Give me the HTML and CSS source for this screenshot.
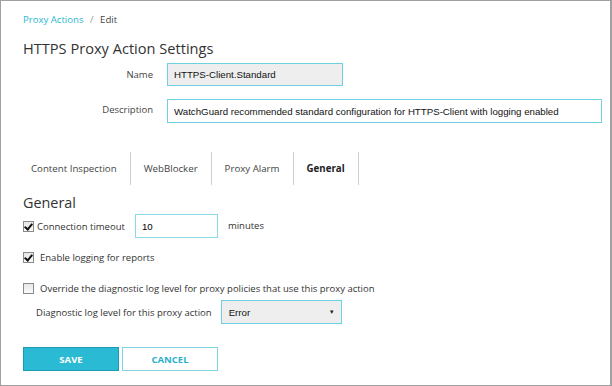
FILE: index.html
```html
<!DOCTYPE html>
<html lang="en">
<head>
    <meta charset="UTF-8">
    <title>HTTPS Proxy Action Settings</title>
    <link rel="stylesheet" href="styles.css">
</head>
<body>
    <div class="frame">
        <div class="breadcrumb">
            <a href="#">Proxy Actions</a>
            <span class="sep">/</span>
            <span>Edit</span>
        </div>
        <h1>HTTPS Proxy Action Settings</h1>

        <div class="form-grid">
            <label class="form-label">Name</label>
            <input class="text-input name-input" type="text" value="HTTPS-Client.Standard">
            <label class="form-label desc-label">Description</label>
            <input class="text-input desc-input" type="text" value="WatchGuard recommended standard configuration for HTTPS-Client with logging enabled">
        </div>

        <div class="tabs">
            <div class="tab first">Content Inspection</div>
            <div class="tab">WebBlocker</div>
            <div class="tab">Proxy Alarm</div>
            <div class="tab active">General</div>
        </div>

        <h2>General</h2>

        <div class="check-row timeout-row">
            <span class="box checked"></span>
            <span class="check-text">Connection timeout</span>
            <input class="timeout-input" type="text" value="10">
            <span class="unit">minutes</span>
        </div>
        <div class="check-row">
            <span class="box checked"></span>
            <span class="check-text spaced">Enable logging for reports</span>
        </div>
        <div class="check-row">
            <span class="box"></span>
            <span class="check-text spaced">Override the diagnostic log level for proxy policies that use this proxy action</span>
        </div>
        <div class="level-row">
            <span>Diagnostic log level for this proxy action</span>
            <div class="select-box">
                <span>Error</span>
                <span class="caret">&#9660;</span>
            </div>
        </div>

        <div class="actions">
            <button class="btn save">SAVE</button>
            <button class="btn cancel">CANCEL</button>
        </div>
    </div>
</body>
</html>
```

FILE: styles.css
```css
/* page frame */
body {
    margin: 0;
    font-family: "Open Sans", Arial, sans-serif;
    color: #333;
    background: #fff;
}

.frame {
    width: 609px;
    height: 384px;
    border: 1px solid #a0a0a0;
    border-right-width: 2px;
    box-sizing: content-box;
}

.frame > * {
    margin-left: 22px;
}

.breadcrumb {
    font-size: 9.6px;
    padding-top: 12px;
    line-height: 14px;
    color: #444;
}

.breadcrumb a {
    color: #2bb8d2;
    text-decoration: none;
}

.breadcrumb .sep {
    color: #999;
    margin: 0 4px;
}

h1 {
    font-size: 14.6px;
    font-weight: 400;
    color: #333;
    margin-top: 11px;
    margin-bottom: 0;
    line-height: 20px;
}

/* name / description */
.form-grid {
    display: grid;
    grid-template-columns: 130px auto;
    column-gap: 14px;
    row-gap: 13px;
    margin-top: 5px;
    align-items: center;
}

.form-label {
    font-size: 9.5px;
    text-align: right;
    color: #444;
}

.desc-label {
    position: relative;
    top: -2px;
}

.text-input {
    font-family: "Liberation Sans", Arial, sans-serif;
    font-size: 9.7px;
    color: #111;
    border: 1px solid #6fd0e2;
    box-sizing: border-box;
    padding: 0 6px;
    outline: none;
}

.name-input {
    width: 176px;
    height: 23px;
    background: #eeeeee;
}

.desc-input {
    width: 435px;
    height: 24px;
    background: #fff;
}

/* tabs */
.tabs {
    display: flex;
    margin-top: 29px;
    height: 33px;
}

.tab {
    font-size: 9.7px;
    color: #444;
    padding: 0 13px;
    border-right: 1px solid #cfcfcf;
    display: flex;
    align-items: center;
}

.tab.first {
    padding-left: 8px;
}

.tab.active {
    font-weight: 700;
    color: #222;
}

h2 {
    font-size: 14.4px;
    font-weight: 400;
    margin-top: 8px;
    margin-bottom: 0;
    line-height: 20px;
    color: #333;
}

/* checkbox rows */
.check-row {
    display: flex;
    align-items: center;
    font-size: 9.5px;
    color: #333;
    height: 24px;
}

.box {
    width: 9px;
    height: 9px;
    border: 1px solid #8a8a8a;
    background: linear-gradient(#e6e6e6, #fafafa);
    position: relative;
    flex: none;
}

.box.checked::after {
    content: "";
    position: absolute;
    left: 2px;
    top: 0;
    width: 3px;
    height: 6px;
    border: solid #111;
    border-width: 0 2px 2px 0;
    transform: rotate(40deg);
}

.check-text {
    margin-left: 3px;
}

.check-text.spaced {
    margin-left: 6px;
}

.timeout-row {
    margin-top: 1px;
}

.check-row + .check-row {
    margin-top: 7px;
}

.timeout-input {
    width: 83px;
    height: 24px;
    box-sizing: border-box;
    margin-left: 10px;
    border: 1px solid #8bd8e6;
    font-family: "Liberation Sans", Arial, sans-serif;
    font-size: 9.7px;
    padding: 0 6px;
    outline: none;
}

.unit {
    margin-left: 10px;
    position: relative;
    top: -1px;
}

.level-row {
    display: flex;
    align-items: center;
    font-size: 9.5px;
    color: #333;
    margin-left: 35px;
}

.select-box {
    width: 121px;
    height: 24px;
    box-sizing: border-box;
    margin-left: 9px;
    background: #eeeeee;
    border: 1px solid #6fd0e2;
    display: flex;
    align-items: center;
    justify-content: space-between;
    padding: 0 6px 0 7px;
    font-family: "Liberation Sans", Arial, sans-serif;
    font-size: 9.7px;
    color: #111;
}

.caret {
    font-size: 6px;
    color: #222;
}

/* buttons */
.actions {
    display: flex;
    gap: 3px;
    margin-top: 23px;
}

.btn {
    width: 96px;
    height: 24px;
    font-family: "Open Sans", Arial, sans-serif;
    font-size: 9.5px;
    font-weight: 700;
    cursor: pointer;
    box-sizing: border-box;
}

.save {
    background: #2bbad4;
    border: 1px solid #1a9ab3;
    color: #fff;
}

.cancel {
    background: #fff;
    border: 1px solid #7fd3e3;
    color: #2bb0cc;
}
```
